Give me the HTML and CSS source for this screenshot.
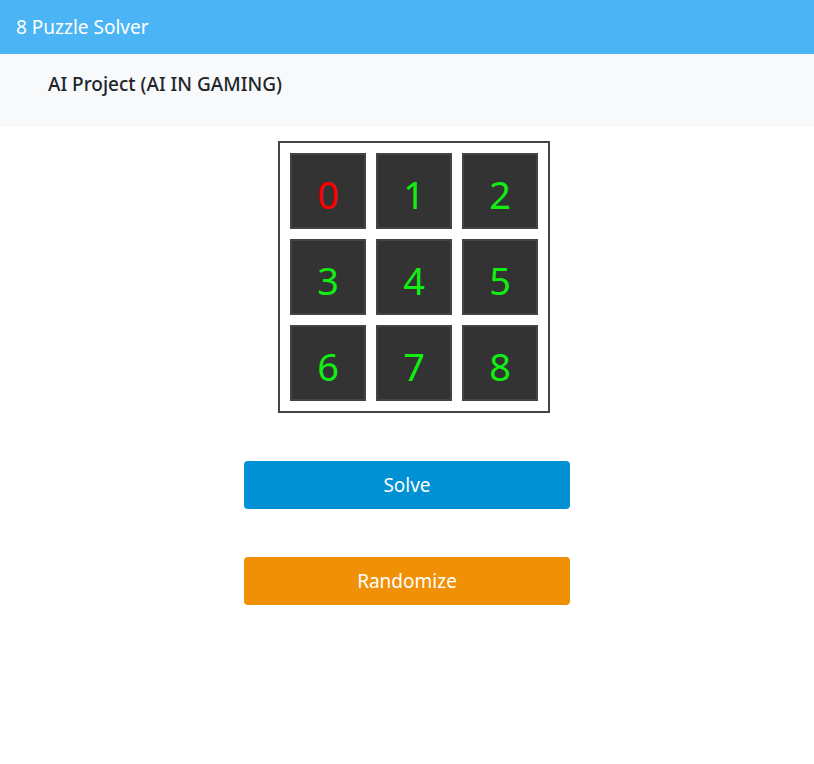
FILE: index.html
```html
<!DOCTYPE html>
<html>
<head>
<meta charset="utf-8">
<title>8 Puzzle Solver</title>
<link rel="stylesheet" href="styles.css">
</head>
<body>
<header class="topbar">8 Puzzle Solver</header>
<section class="subbar"><h1 class="subtitle">AI Project (AI IN GAMING)</h1></section>
<main class="main">
  <div class="board">
    <div class="tile blank">0</div>
    <div class="tile">1</div>
    <div class="tile">2</div>
    <div class="tile">3</div>
    <div class="tile">4</div>
    <div class="tile">5</div>
    <div class="tile">6</div>
    <div class="tile">7</div>
    <div class="tile">8</div>
  </div>
  <button class="btn btn-solve">Solve</button>
  <button class="btn btn-random">Randomize</button>
</main>
</body>
</html>
```
FILE: styles.css
```css
* { box-sizing: border-box; }
body {
  margin: 0;
  font-family: "Noto Sans", "Open Sans", sans-serif;
  background: #fff;
}
.topbar {
  height: 54px;
  background: #4bb4f5;
  color: #fff;
  font-size: 19px;
  display: flex;
  align-items: center;
  padding-left: 16px;
}
.subbar {
  height: 73px;
  background: #f8f9fa;
  padding: 17px 48px 0;
}
.subtitle {
  margin: 0;
  font-size: 19px;
  font-weight: 500;
  color: #212529;
}
.main {
  display: flex;
  flex-direction: column;
  align-items: center;
  padding-top: 14px;
}
.board {
  margin-left: 14px;
  width: 272px;
  height: 272px;
  border: 2px solid #444;
  padding: 10px;
  display: grid;
  grid-template-columns: repeat(3, 76px);
  grid-template-rows: repeat(3, 76px);
  gap: 10px;
}
.tile {
  background: #333;
  border: 2px solid #444;
  color: #11ee11;
  font-size: 38px;
  padding-top: 6px;
  display: flex;
  align-items: center;
  justify-content: center;
}
.tile.blank { color: #ff0000; }
.btn {
  width: 326px;
  height: 48px;
  border: none;
  border-radius: 4px;
  color: #fff;
  font-family: inherit;
  font-size: 19px;
}
.btn-solve { background: #0091d5; margin-top: 48px; }
.btn-random { background: #f09007; margin-top: 48px; }
```
